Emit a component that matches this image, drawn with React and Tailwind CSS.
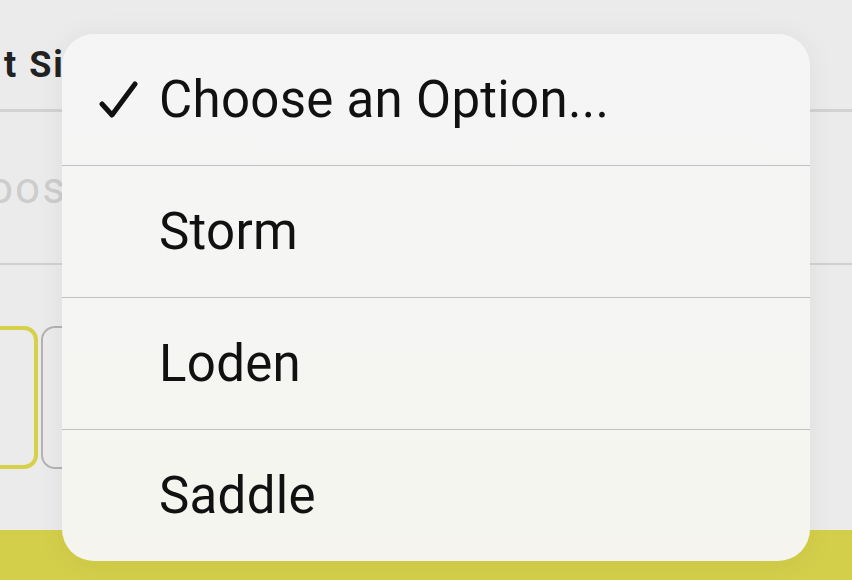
import React from "react";

const options = ["Choose an Option...", "Storm", "Loden", "Saddle"];

function Check() {
  return (
    <svg width="40" height="40" viewBox="0 0 40 40" className="shrink-0">
      <path
        d="M3 24 L13 35 L36 4"
        fill="none"
        stroke="#111"
        strokeWidth="5"
        strokeLinecap="round"
        strokeLinejoin="round"
      />
    </svg>
  );
}

export default function App() {
  return (
    <div className="relative w-[852px] h-[580px] overflow-hidden bg-[#ebebeb] font-['Roboto',sans-serif]">
      {/* page behind the menu */}
      <div className="flex flex-col h-full">
        <div className="h-[112px] flex items-start pt-[38px] border-b-[3px] border-[#d2d2d2]">
          <span className="ml-[4px] text-[36px] font-bold text-[#222] tracking-[2px] whitespace-nowrap">
            t Size
          </span>
        </div>
        <div className="h-[153px] flex items-center border-b-[2px] border-[#d0d0d0]">
          <span className="-ml-[12px] text-[44px] text-[#cdcdcd] tracking-[2px] whitespace-nowrap">
            oose an Option
          </span>
        </div>
        <div className="flex gap-[3px] mt-[61px] -ml-[30px]">
          <div className="w-[68px] h-[143px] rounded-[14px] border-[4px] border-[#d7d14a]" />
          <div className="w-[90px] h-[143px] rounded-[14px] border-[2px] border-[#b3b3b3]" />
        </div>
        <div className="mt-auto h-[50px] bg-[#d4cf4a]" />
      </div>

      {/* dropdown menu overlay */}
      <div className="absolute left-[62px] top-[34px] w-[748px] h-[527px] rounded-[32px] overflow-hidden bg-gradient-to-b from-[#f5f5f5] via-[#f5f5f4] to-[#f5f5ee] shadow-[0_2px_30px_rgba(0,0,0,0.06)] flex flex-col">
        {options.map((opt, i) => (
          <div
            key={opt}
            className={
              "flex-1 flex items-center " +
              (i < options.length - 1 ? "border-b border-[#c2c2c2]" : "")
            }
          >
            <div className="w-[97px] flex justify-end pr-[20px]">
              {i === 0 && <Check />}
            </div>
            <span className="text-[51px] leading-none text-[#111] tracking-[0.3px]">{opt}</span>
          </div>
        ))}
      </div>
    </div>
  );
}
